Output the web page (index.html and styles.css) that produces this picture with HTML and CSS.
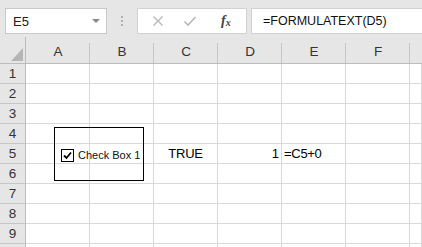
FILE: index.html
```html
<!DOCTYPE html>
<html>
<head>
<meta charset="utf-8">
<link rel="stylesheet" href="styles.css">
</head>
<body>
<div class="app">
  <div class="fbar">
    <div class="namebox">
      <span class="name">E5</span>
      <svg class="arrow" width="8" height="5" viewBox="0 0 8 5"><polygon points="0,0 8,0 4,4" fill="#8a8a8a"/></svg>
    </div>
    <div class="dots"><i></i><i></i><i></i></div>
    <div class="btns">
      <svg class="ico" width="12" height="12" viewBox="0 0 12 12"><path d="M1.5 1.5 L10.5 10.5 M10.5 1.5 L1.5 10.5" stroke="#b8b8b8" stroke-width="1.4" fill="none"/></svg>
      <svg class="ico" width="14" height="12" viewBox="0 0 14 12"><path d="M1.5 6.5 L5 10 L12.5 2" stroke="#b8b8b8" stroke-width="1.6" fill="none"/></svg>
      <span class="fx">f<sub>x</sub></span>
    </div>
    <div class="formula">=FORMULATEXT(D5)</div>
  </div>
  <div class="sheet">
    <div class="grid">
      <div class="corner"><svg width="12" height="13" viewBox="0 0 12 13"><polygon points="12,0 12,13 0,13" fill="#b5b5b5"/></svg></div>
      <div class="ch">A</div><div class="ch">B</div><div class="ch">C</div><div class="ch">D</div><div class="ch">E</div><div class="ch">F</div><div class="ch last"></div>

      <div class="rh">1</div><div class="c"></div><div class="c"></div><div class="c"></div><div class="c"></div><div class="c"></div><div class="c"></div><div class="c"></div>
      <div class="rh">2</div><div class="c"></div><div class="c"></div><div class="c"></div><div class="c"></div><div class="c"></div><div class="c"></div><div class="c"></div>
      <div class="rh">3</div><div class="c"></div><div class="c"></div><div class="c"></div><div class="c"></div><div class="c"></div><div class="c"></div><div class="c"></div>
      <div class="rh">4</div><div class="c"></div><div class="c"></div><div class="c"></div><div class="c"></div><div class="c"></div><div class="c"></div><div class="c"></div>
      <div class="rh">5</div><div class="c"></div><div class="c"></div><div class="c center">TRUE</div><div class="c right">1</div><div class="c left">=C5+0</div><div class="c"></div><div class="c"></div>
      <div class="rh">6</div><div class="c"></div><div class="c"></div><div class="c"></div><div class="c"></div><div class="c"></div><div class="c"></div><div class="c"></div>
      <div class="rh">7</div><div class="c"></div><div class="c"></div><div class="c"></div><div class="c"></div><div class="c"></div><div class="c"></div><div class="c"></div>
      <div class="rh">8</div><div class="c"></div><div class="c"></div><div class="c"></div><div class="c"></div><div class="c"></div><div class="c"></div><div class="c"></div>
      <div class="rh">9</div><div class="c"></div><div class="c"></div><div class="c"></div><div class="c"></div><div class="c"></div><div class="c"></div><div class="c"></div>
      <div class="rh"></div><div class="c"></div><div class="c"></div><div class="c"></div><div class="c"></div><div class="c"></div><div class="c"></div><div class="c"></div>
    </div>
    <div class="cbox">
      <span class="tick"><svg width="11" height="11" viewBox="0 0 11 11"><path d="M2 5.5 L4.5 8 L9 2.5" stroke="#000" stroke-width="1.8" fill="none"/></svg></span>
      <span class="cblabel">Check Box 1</span>
    </div>
  </div>
</div>
</body>
</html>
```

FILE: styles.css
```css
html, body {
  margin: 0;
  padding: 0;
  width: 422px;
  height: 247px;
  overflow: hidden;
  background: #e6e6e6;
}
.app {
  font-family: "Liberation Sans", Arial, sans-serif;
  color: #000;
}
.fbar {
  height: 37px;
  box-sizing: border-box;
  padding-top: 8px;
  display: flex;
  align-items: flex-start;
  background: #e6e6e6;
}
.namebox {
  margin-left: 5px;
  width: 102px;
  height: 26px;
  box-sizing: border-box;
  background: #fff;
  border: 1px solid #c9c9c9;
  display: flex;
  align-items: center;
  justify-content: space-between;
  padding: 0 6px 0 7px;
}
.name {
  font-size: 13px;
  color: #222;
}
.arrow {
  margin-top: 1px;
}
.dots {
  width: 30px;
  height: 26px;
  display: flex;
  flex-direction: column;
  align-items: center;
  justify-content: center;
  gap: 2px;
}
.dots i {
  display: block;
  width: 2px;
  height: 2px;
  background: #b0b0b0;
}
.btns {
  width: 110px;
  height: 26px;
  box-sizing: border-box;
  background: #fff;
  border: 1px solid #d2d2d2;
  display: flex;
  align-items: center;
  padding-left: 14px;
}
.btns .ico:first-child {
  margin-right: 19px;
}
.btns .ico:nth-child(2) {
  margin-right: 24px;
}
.fx {
  font-family: "Liberation Serif", "Times New Roman", serif;
  font-style: italic;
  font-size: 14px;
  color: #444;
  font-weight: bold;
}
.fx sub {
  font-size: 10px;
  vertical-align: -1px;
}
.formula {
  margin-left: 4px;
  flex: 1;
  height: 26px;
  box-sizing: border-box;
  background: #fff;
  border: 1px solid #d2d2d2;
  border-right: none;
  font-size: 12.5px;
  line-height: 24px;
  padding-left: 11px;
  color: #111;
}
.sheet {
  position: relative;
}
.grid {
  display: grid;
  grid-template-columns: 26px repeat(6, 64px) 1fr;
  grid-template-rows: 27px repeat(10, 20px);
  background: #fff;
}
.corner, .ch {
  background: #e6e6e6;
  border-bottom: 1px solid #bcbcbc;
  box-sizing: border-box;
}
.corner {
  border-right: 1px solid #bcbcbc;
  display: flex;
  align-items: flex-end;
  justify-content: flex-end;
  padding: 0 2px 2px 0;
}
.ch {
  position: relative;
  font-size: 13.5px;
  color: #333;
  display: flex;
  align-items: flex-end;
  justify-content: center;
  padding-bottom: 4px;
}
.ch::after {
  content: "";
  position: absolute;
  right: 0;
  top: 6px;
  bottom: 0;
  width: 1px;
  background: #c6c6c6;
}
.ch.last::after {
  display: none;
}
.rh {
  background: #e6e6e6;
  border-right: 1px solid #bcbcbc;
  border-bottom: 1px solid #c6c6c6;
  box-sizing: border-box;
  font-size: 13.5px;
  color: #333;
  display: flex;
  align-items: center;
  justify-content: center;
}
.c {
  border-right: 1px solid #d8d8d8;
  border-bottom: 1px solid #d8d8d8;
  box-sizing: border-box;
  font-size: 13px;
  display: flex;
  align-items: center;
  white-space: nowrap;
}
.center {
  justify-content: center;
  letter-spacing: -0.2px;
}
.right {
  justify-content: flex-end;
  padding-right: 2px;
}
.left {
  padding-left: 2px;
  letter-spacing: -0.3px;
}
.cbox {
  position: absolute;
  left: 54px;
  top: 90px;
  width: 90px;
  height: 54px;
  box-sizing: border-box;
  border: 1px solid #000;
  display: flex;
  align-items: center;
  padding-left: 6px;
  padding-top: 2px;
}
.tick {
  width: 13px;
  height: 13px;
  box-sizing: border-box;
  border: 1px solid #000;
  background: #fff;
  display: flex;
  align-items: center;
  justify-content: center;
  margin-right: 4px;
}
.cblabel {
  font-size: 11px;
  color: #111;
}
```
